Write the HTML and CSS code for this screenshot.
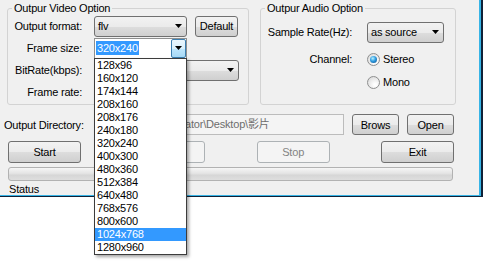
FILE: index.html
```html
<!DOCTYPE html>
<html>
<head>
  <title>Video Converter</title>
  <link rel="stylesheet" href="styles.css">
</head>
<body>

<div class="frame">
  <div class="window">

    <div class="groups">
      <fieldset class="group video">
        <legend>Outpur Video Option</legend>

        <div class="row">
          <label class="lbl">Output format:</label>
          <div class="combo fmt"><span>flv</span><svg class="arrow" width="7" height="4"><polygon points="0,0 7,0 3.5,4"/></svg></div>
          <button class="btn default">Default</button>
        </div>

        <div class="row">
          <label class="lbl">Frame size:</label>
          <div class="combo-edit">
            <span class="sel">320x240</span>
            <span class="drop-btn"><svg class="arrow" width="7" height="4"><polygon points="0,0 7,0 3.5,4"/></svg></span>

            <ul class="droplist">
              <li>128x96</li>
              <li>160x120</li>
              <li>174x144</li>
              <li>208x160</li>
              <li>208x176</li>
              <li>240x180</li>
              <li>320x240</li>
              <li>400x300</li>
              <li>480x360</li>
              <li>512x384</li>
              <li>640x480</li>
              <li>768x576</li>
              <li>800x600</li>
              <li class="hot">1024x768</li>
              <li>1280x960</li>
            </ul>
          </div>
        </div>

        <div class="row">
          <label class="lbl">BitRate(kbps):</label>
          <div class="combo bitrate"><span></span><svg class="arrow" width="7" height="4"><polygon points="0,0 7,0 3.5,4"/></svg></div>
        </div>

        <div class="row">
          <label class="lbl">Frame rate:</label>
          <div class="combo fmt"><span></span><svg class="arrow" width="7" height="4"><polygon points="0,0 7,0 3.5,4"/></svg></div>
        </div>
      </fieldset>

      <fieldset class="group audio">
        <legend>Outpur Audio Option</legend>

        <div class="row">
          <label class="lbl">Sample Rate(Hz):</label>
          <div class="combo rate"><span>as source</span><svg class="arrow" width="7" height="4"><polygon points="0,0 7,0 3.5,4"/></svg></div>
        </div>

        <div class="row channel">
          <label class="lbl">Channel:</label>
          <span class="radio on"></span><span>Stereo</span>
        </div>

        <div class="row mono">
          <span class="lbl"></span>
          <span class="radio"></span><span>Mono</span>
        </div>
      </fieldset>
    </div>

    <div class="dir-row">
      <label class="dir-lbl">Output Directory:</label>
      <div class="field">C:\Users\Administrator\Desktop\影片</div>
      <button class="btn small">Brows</button>
      <button class="btn small">Open</button>
    </div>

    <div class="btn-row">
      <button class="btn wide">Start</button>
      <button class="btn wide" disabled>Pause</button>
      <button class="btn wide" disabled>Stop</button>
      <button class="btn wide">Exit</button>
    </div>

    <div class="progress"></div>

    <div class="status">Status</div>

  </div>
</div>

</body>
</html>
```

FILE: styles.css
```css
html {
  background-color: #fff;
}

body {
  margin: 0;
  min-height: 261px;
  background-color: #fff;
  font-family: "Liberation Sans", "Noto Sans CJK SC", sans-serif;
  font-size: 11px;
  letter-spacing: -0.2px;
  color: #000;
}

.frame {
  width: 481px;
  border-right: 2px solid #0f2137;
  border-bottom: 1px solid #0f2137;
}

.window {
  height: 195px;
  background-color: #f0f0f0;
  border-right: 2px solid #37b4e6;
  border-bottom: 1px solid #37b4e6;
}

/* group boxes */
.groups {
  display: flex;
  padding-top: 2px;
}

.group {
  margin: 0;
  padding: 0 0 1px 0;
  min-width: 0;
  box-sizing: border-box;
  border: 1px solid #d3d3d3;
  border-radius: 3px;
}

.group legend {
  margin-left: 4px;
  padding: 0 2px;
  line-height: 13px;
}

.video {
  margin-left: 7px;
  width: 242px;
}

.audio {
  margin-left: 11px;
  width: 196px;
  padding-top: 6px;
}

.row {
  display: flex;
  align-items: center;
  height: 22px;
}

.lbl {
  text-align: right;
  white-space: nowrap;
}

.video .lbl {
  width: 74px;
  margin-right: 12px;
}

.audio .lbl {
  width: 91px;
  margin-right: 15px;
}

.audio .channel {
  margin-top: 5px;
}

.audio .mono {
  margin-top: 1px;
}

/* combo boxes */
.combo {
  box-sizing: border-box;
  height: 21px;
  display: flex;
  align-items: center;
  justify-content: space-between;
  padding: 0 4px 0 3px;
  border: 1px solid #707070;
  border-radius: 3px;
  background: linear-gradient(#f2f2f2 0%, #ebebeb 50%, #dddddd 51%, #cfcfcf 100%);
}

.combo.fmt {
  width: 93px;
}

.combo.bitrate {
  width: 145px;
}

.combo.rate {
  width: 77px;
}

.arrow {
  display: block;
  fill: #000;
}

.combo-edit {
  position: relative;
  box-sizing: border-box;
  width: 93px;
  height: 21px;
  display: flex;
  align-items: center;
  justify-content: space-between;
  background-color: #fff;
  border: 1px solid #8e8f8f;
}

.sel {
  margin-left: 1px;
  padding: 0 1px;
  line-height: 14px;
  background-color: #3399ff;
  color: #fff;
}

.drop-btn {
  box-sizing: border-box;
  width: 15px;
  height: 19px;
  display: flex;
  align-items: center;
  justify-content: center;
  border: 1px solid #3c7fb1;
  border-radius: 2px;
  background: linear-gradient(#eaf6fd 0%, #d9f0fc 50%, #bee6fd 51%, #a7d9f5 100%);
}

/* the open list of frame sizes */
.droplist {
  position: absolute;
  left: -1px;
  top: 100%;
  z-index: 10;
  width: 93px;
  box-sizing: border-box;
  margin: 0;
  padding: 0;
  list-style: none;
  background-color: #fff;
  border: 1px solid #3c3c3c;
  box-shadow: 2px 2px 3px rgba(0, 0, 0, 0.35);
}

.droplist li {
  height: 13px;
  line-height: 13px;
  padding-left: 2px;
}

.droplist .hot {
  background-color: #3399ff;
  color: #fff;
}

/* radio buttons */
.radio {
  position: relative;
  box-sizing: border-box;
  width: 13px;
  height: 13px;
  margin-right: 3px;
  border: 1px solid #8e8f8f;
  border-radius: 50%;
  background: radial-gradient(circle at 65% 70%, #ffffff 10%, #d9d9d9 90%);
}

.radio.on::after {
  content: "";
  position: absolute;
  left: 2px;
  top: 2px;
  width: 7px;
  height: 7px;
  border-radius: 50%;
  background: radial-gradient(circle at 40% 35%, #b8f2ff 0%, #2f9be0 45%, #0b4c86 100%);
}

/* buttons */
.btn {
  box-sizing: border-box;
  font: inherit;
  letter-spacing: inherit;
  color: #000;
  padding: 0;
  border: 1px solid #707070;
  border-radius: 3px;
  background: linear-gradient(#f2f2f2 0%, #ebebeb 50%, #dddddd 51%, #cfcfcf 100%);
}

.btn:disabled {
  color: #838383;
  border-color: #adb2b5;
  background: #f4f4f4;
}

.btn.default {
  width: 43px;
  height: 21px;
  margin-left: 8px;
}

/* output directory */
.dir-row {
  display: flex;
  align-items: center;
  height: 21px;
  margin-top: 9px;
  padding-left: 4px;
}

.dir-lbl {
  width: 90px;
  white-space: nowrap;
}

.field {
  box-sizing: border-box;
  width: 250px;
  height: 21px;
  padding-left: 2px;
  line-height: 19px;
  white-space: nowrap;
  overflow: hidden;
  color: #6d6d6d;
  background-color: #f4f4f4;
  border: 1px solid #bcbcbc;
}

.btn.small {
  width: 47px;
  height: 21px;
  margin-left: 8px;
}

.btn-row {
  display: flex;
  justify-content: space-between;
  width: 446px;
  height: 22px;
  margin: 6px 0 0 8px;
}

.btn.wide {
  width: 73px;
  height: 22px;
}

.progress {
  box-sizing: border-box;
  width: 445px;
  height: 14px;
  margin: 4px 0 0 8px;
  border: 1px solid #b2b2b2;
  border-radius: 3px;
  background: linear-gradient(#f6f6f6 0%, #e4e4e4 45%, #d6d6d6 60%, #dedede 100%);
}

.status {
  padding: 2px 0 0 9px;
  line-height: 13px;
}
```
